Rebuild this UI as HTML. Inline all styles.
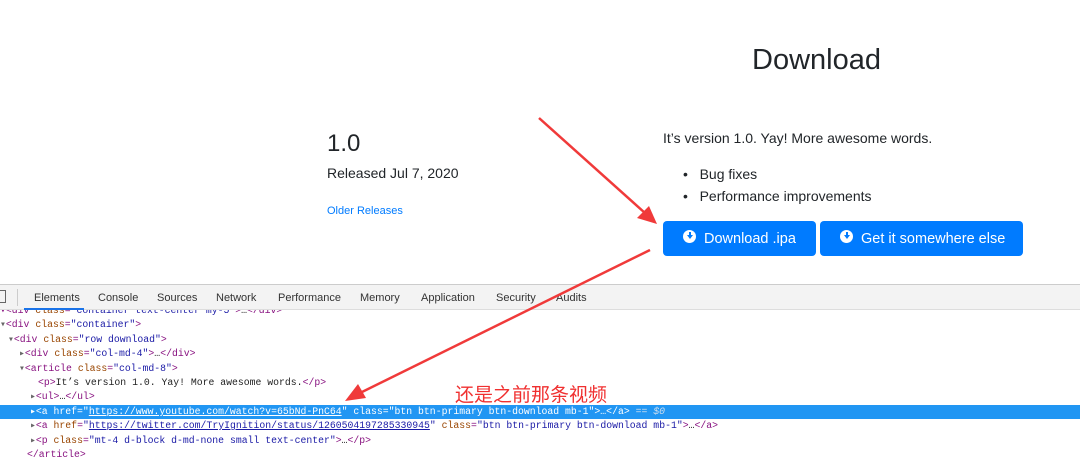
<!DOCTYPE html>
<html><head><meta charset="utf-8"><style>
*{margin:0;padding:0;box-sizing:border-box}
body{width:1080px;height:467px;overflow:hidden;background:#fff;position:relative;font-family:"Liberation Sans","Noto Sans CJK SC",sans-serif;color:#212529}
.a{position:absolute;white-space:nowrap}
.btn{position:absolute;background:#007bff;border-radius:4px;color:#fff;font-size:14.5px;height:35px;line-height:37px}
.ic{display:inline-block;width:13px;height:13px;border-radius:50%;background:#fff;position:relative;vertical-align:0px;margin-right:8px}
.ic:after{content:"";position:absolute;left:3.5px;top:5px;border-left:3px solid transparent;border-right:3px solid transparent;border-top:4px solid #007bff}
.ic:before{content:"";position:absolute;left:5.5px;top:2px;width:2px;height:4px;background:#007bff}
.tabs{position:absolute;left:0;top:284px;width:1080px;height:26px;background:#f3f3f3;border-top:1px solid #ccc;border-bottom:1px solid #ddd;font-size:11px;color:#333;z-index:2}
.tabs span{position:absolute;top:7px}
.dt{position:absolute;left:0;font-family:"Liberation Mono",monospace;font-size:9.8px;height:14.4px;line-height:14.4px;white-space:nowrap;color:#881280}
.at{color:#994500}.v{color:#1a1aa6}.u{color:#1a1aa6;text-decoration:underline}.t{color:#222}
.tri{color:#666}
.sel{background:#2196f3;color:#fff;width:1080px}
</style></head><body>
<div class="a" style="left:752px;top:44px;font-size:29px;font-weight:500">Download</div>
<div class="a" style="left:327px;top:130px;font-size:24px;font-weight:500">1.0</div>
<div class="a" style="left:327px;top:165px;font-size:14px">Released Jul 7, 2020</div>
<div class="a" style="left:327px;top:205px;font-size:11px;color:#007bff">Older Releases</div>
<div class="a" style="left:663px;top:130px;font-size:14px">It’s version 1.0. Yay! More awesome words.</div>
<div class="a" style="left:683px;top:166px;font-size:14px">•&nbsp;&nbsp; Bug fixes</div>
<div class="a" style="left:683px;top:188px;font-size:14px">•&nbsp;&nbsp; Performance improvements</div>
<div class="btn" style="left:663px;top:221px;width:153px;padding-left:20px"><span class="ic"></span>Download .ipa</div>
<div class="btn" style="left:820px;top:221px;width:203px;padding-left:20px"><span class="ic"></span>Get it somewhere else</div>

<div class="tabs">
<div style="position:absolute;left:-4px;top:5px;width:10px;height:13px;border:1px solid #666"></div>
<div style="position:absolute;left:17px;top:4px;width:1px;height:17px;background:#ccc"></div>
<span style="left:34px">Elements</span>
<div style="position:absolute;left:24px;top:23px;width:60px;height:2px;background:#1a73e8"></div>
<span style="left:98px">Console</span><span style="left:157px">Sources</span><span style="left:216px">Network</span><span style="left:278px">Performance</span><span style="left:360px">Memory</span><span style="left:421px">Application</span><span style="left:496px">Security</span><span style="left:556px">Audits</span>
</div>

<div class="dt" style="top:304px;left:0">▾&lt;div <span class="at">class</span>=<span class="v">"container text-center my-5"</span>&gt;<span class="t">…</span>&lt;/div&gt;</div>
<div class="dt" style="top:318px"><span class="tri">▾</span>&lt;div <span class="at">class</span>=<span class="v">"container"</span>&gt;</div>
<div class="dt" style="top:333px;left:8px"><span class="tri">▾</span>&lt;div <span class="at">class</span>=<span class="v">"row download"</span>&gt;</div>
<div class="dt" style="top:347px;left:19px"><span class="tri">▸</span>&lt;div <span class="at">class</span>=<span class="v">"col-md-4"</span>&gt;<span class="t">…</span>&lt;/div&gt;</div>
<div class="dt" style="top:362px;left:19px"><span class="tri">▾</span>&lt;article <span class="at">class</span>=<span class="v">"col-md-8"</span>&gt;</div>
<div class="dt" style="top:376px;left:38px">&lt;p&gt;<span class="t">It’s version 1.0. Yay! More awesome words.</span>&lt;/p&gt;</div>
<div class="dt" style="top:390px;left:30px"><span class="tri">▸</span>&lt;ul&gt;<span class="t">…</span>&lt;/ul&gt;</div>
<div class="dt sel" style="top:405px;padding-left:30px">▸&lt;a href="<span style="text-decoration:underline">https://www.youtube.com/watch?v=65bNd-PnC64</span>" class="btn btn-primary btn-download mb-1"&gt;…&lt;/a&gt; <span style="color:#cde">== <i>$0</i></span></div>
<div class="dt" style="top:419px;left:30px"><span class="tri">▸</span>&lt;a <span class="at">href</span>=<span class="v">"</span><span class="u">https://twitter.com/TryIgnition/status/1260504197285330945</span><span class="v">"</span> <span class="at">class</span>=<span class="v">"btn btn-primary btn-download mb-1"</span>&gt;<span class="t">…</span>&lt;/a&gt;</div>
<div class="dt" style="top:434px;left:30px"><span class="tri">▸</span>&lt;p <span class="at">class</span>=<span class="v">"mt-4 d-block d-md-none small text-center"</span>&gt;<span class="t">…</span>&lt;/p&gt;</div>
<div class="dt" style="top:448px;left:27px">&lt;/article&gt;</div>

<div class="a" style="left:455px;top:380px;font-size:19px;color:#f03030">还是之前那条视频</div>

<svg width="1080" height="467" style="position:absolute;left:0;top:0;z-index:3" viewBox="0 0 1080 467">
<g fill="#f03a3a" stroke="#f03a3a">
<line x1="539" y1="118" x2="645" y2="213" stroke-width="2.5"/>
<polygon points="657,224 637,218 649,206" stroke="none"/>
<line x1="650" y1="250" x2="362" y2="392" stroke-width="2.5"/>
<polygon points="345,401 358,384 366,398" stroke="none"/>
</g>
</svg>
</body></html>
